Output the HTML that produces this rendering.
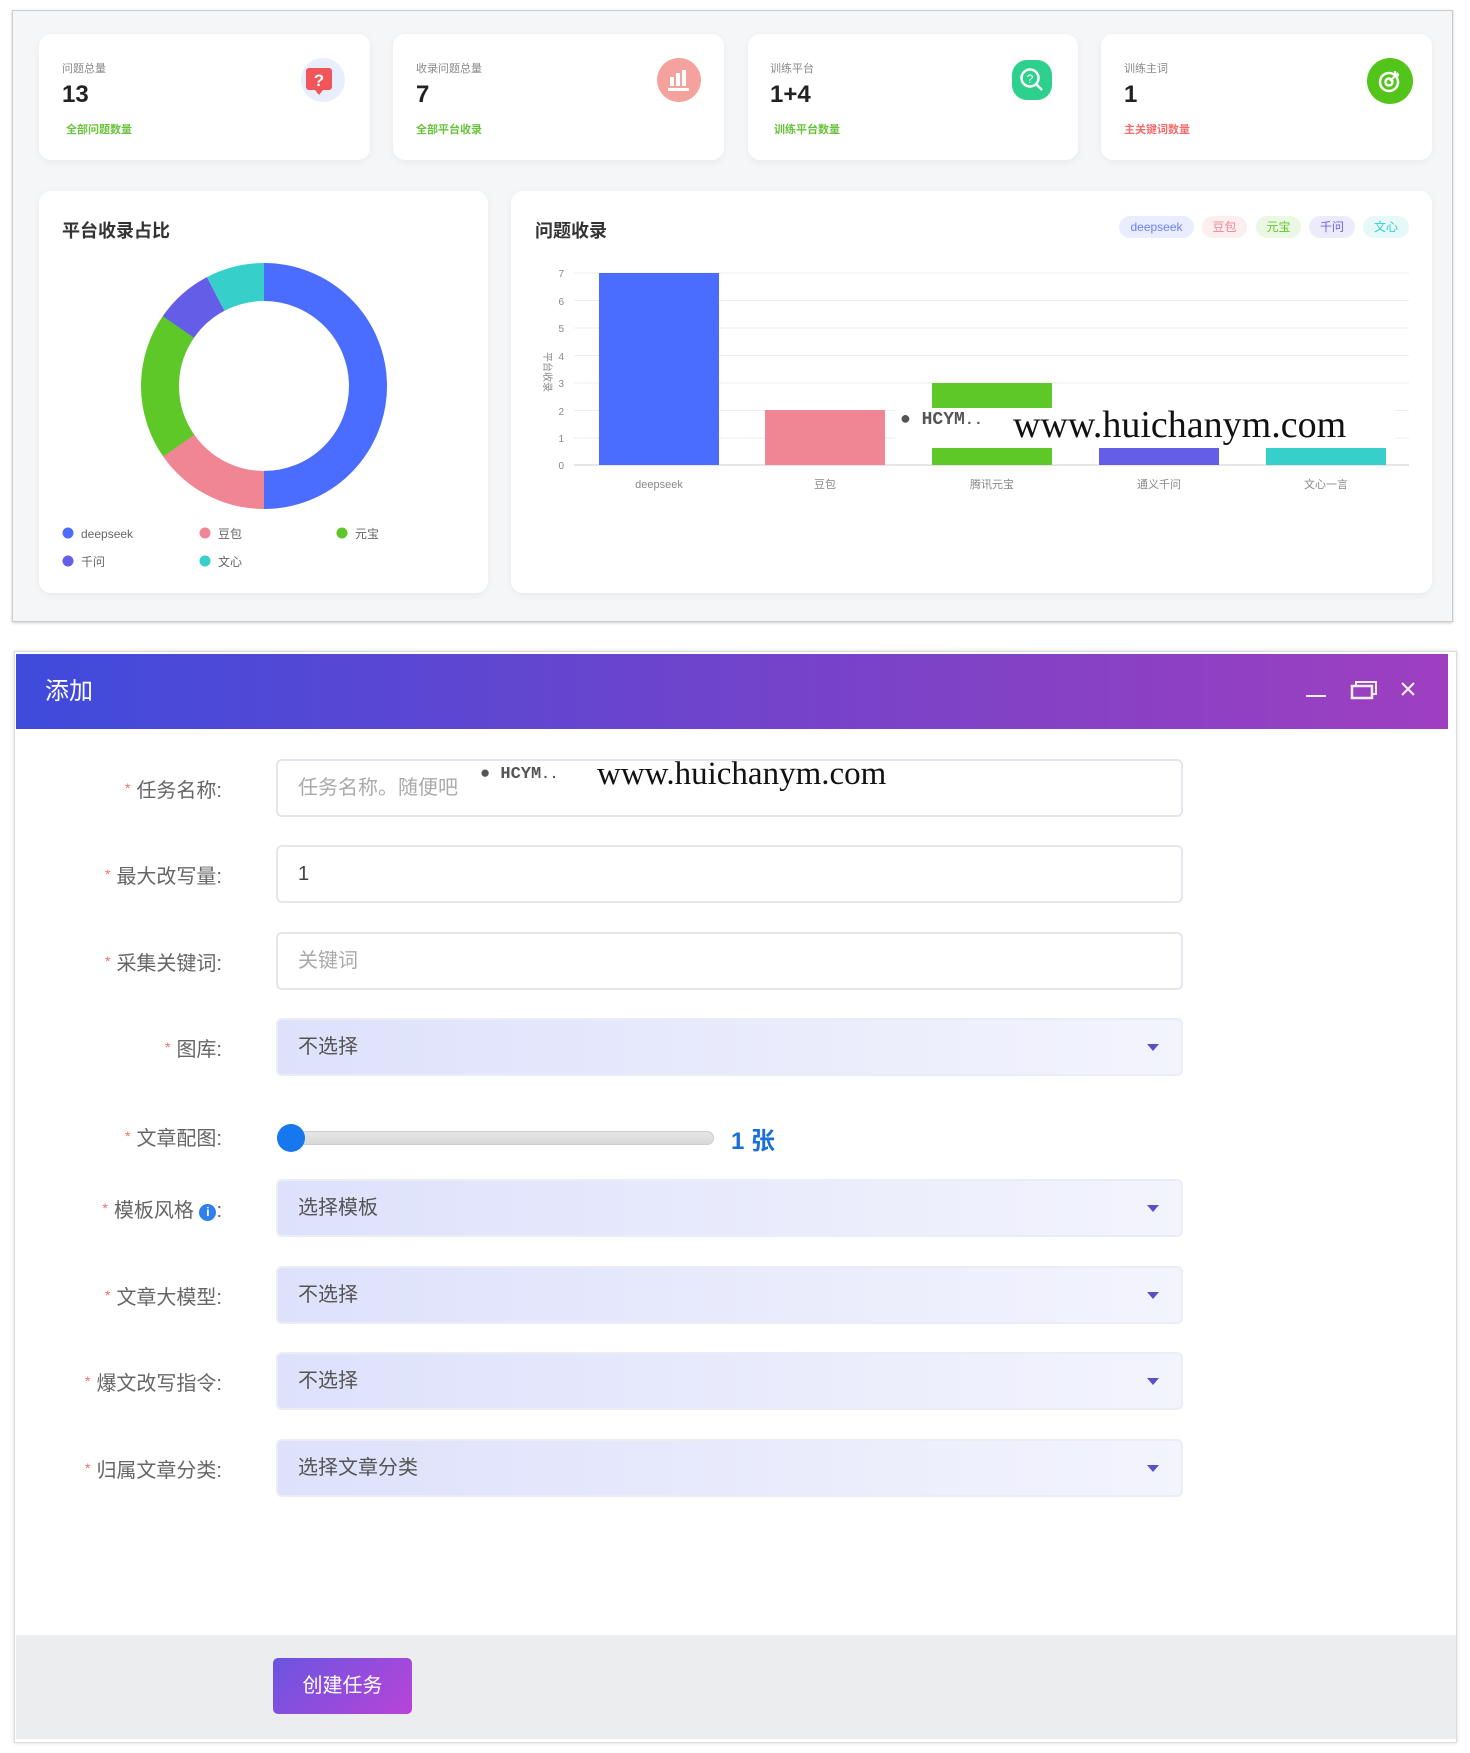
<!DOCTYPE html>
<html><head><meta charset="utf-8"><style>
*{box-sizing:border-box;margin:0;padding:0}
body{width:1470px;height:1753px;background:#fff;font-family:"Liberation Sans","Noto Sans CJK SC",sans-serif;position:relative;overflow:hidden}
.abs{position:absolute}
.panel{left:12px;top:10px;width:1441px;height:612px;background:#f5f6f8;border:1px solid #ccc;box-shadow:0 1px 3px rgba(0,0,0,.2)}
.card{background:#fff;border-radius:12px;box-shadow:0 2px 8px rgba(0,0,0,.05)}
.lbl{font-size:11px;color:#888}
.num{font-size:24px;font-weight:bold;color:#222}
.sub{font-size:11px;font-weight:bold}
.ic{width:44px;height:44px;border-radius:50%}
.tag{top:216px;height:22px;border-radius:11px;font-size:12px;line-height:22px;text-align:center}
.row{left:0;width:1440px}
.rl{position:absolute;right:1218px;font-size:20px;color:#666;white-space:nowrap}
.rl b{color:#f56c6c;font-weight:normal;font-size:14px;margin-right:6px;vertical-align:4px}
.inp{position:absolute;left:276px;width:910px;height:58px;border:2px solid #e4e6ee;border-radius:6px;font-size:20px;line-height:54px;padding-left:20px;color:#aaa}
.sel{background:linear-gradient(90deg,#dde1fb,#f3f4fd);border-color:#ececf6;color:#555}
.sel:after{content:"";position:absolute;right:22px;top:24px;border:6px solid transparent;border-top:7px solid #5a4fc8}
</style></head><body>
<div class="abs panel"></div>
<div class="abs card" style="left:39px;top:34px;width:331px;height:126px"></div>
<div class="abs card" style="left:393px;top:34px;width:331px;height:126px"></div>
<div class="abs card" style="left:748px;top:34px;width:330px;height:126px"></div>
<div class="abs card" style="left:1101px;top:34px;width:331px;height:126px"></div>
<div class="abs lbl" style="left:62px;top:60px">问题总量</div>
<div class="abs num" style="left:62px;top:81px">13</div>
<div class="abs sub" style="left:66px;top:121px;color:#67c23a">全部问题数量</div>
<div class="abs lbl" style="left:416px;top:60px">收录问题总量</div>
<div class="abs num" style="left:416px;top:81px">7</div>
<div class="abs sub" style="left:416px;top:121px;color:#67c23a">全部平台收录</div>
<div class="abs lbl" style="left:770px;top:60px">训练平台</div>
<div class="abs num" style="left:770px;top:81px">1+4</div>
<div class="abs sub" style="left:774px;top:121px;color:#67c23a">训练平台数量</div>
<div class="abs lbl" style="left:1124px;top:60px">训练主词</div>
<div class="abs num" style="left:1124px;top:81px">1</div>
<div class="abs sub" style="left:1124px;top:121px;color:#f56c6c">主关键词数量</div>
<div class="abs ic" style="left:301px;top:58px;background:#e8eefc"></div>
<svg class="abs" style="left:305px;top:66px" width="30" height="32"><rect x="1" y="2" width="26" height="22" rx="3" fill="#f0555a"/><path d="M10 24l4 5 4-5z" fill="#f0555a"/><text x="14" y="20" font-size="17" font-weight="bold" fill="#fff" text-anchor="middle" font-family="Liberation Sans">?</text></svg>
<div class="abs ic" style="left:657px;top:58px;background:#f5a19d"></div>
<svg class="abs" style="left:667px;top:68px" width="24" height="24"><rect x="3" y="9" width="4" height="9" fill="#fff"/><rect x="9" y="5" width="4" height="13" fill="#fff"/><rect x="15" y="2" width="4" height="16" fill="#fff"/><rect x="1" y="20" width="21" height="3" fill="#fff"/></svg>
<div class="abs" style="left:1012px;top:60px;width:40px;height:40px;border-radius:15px;background:#2ed08e"></div>
<svg class="abs" style="left:1018px;top:66px" width="28" height="28"><circle cx="12" cy="12" r="8.5" fill="none" stroke="#fff" stroke-width="2.5"/><path d="M18 18l6 6" stroke="#fff" stroke-width="2.5"/><text x="12" y="17" font-size="12" fill="#fff" text-anchor="middle" font-family="Liberation Sans">?</text></svg>
<div class="abs ic" style="left:1367px;top:58px;background:#52c41a;width:46px;height:46px"></div>
<svg class="abs" style="left:1376px;top:67px" width="28" height="28"><circle cx="13" cy="15" r="9" fill="none" stroke="#fff" stroke-width="2.5"/><circle cx="13" cy="15" r="3.5" fill="none" stroke="#fff" stroke-width="2.5"/><path d="M14 14l8-8M19 4v4h4" stroke="#fff" stroke-width="2.2" fill="none"/></svg>
<div class="abs card" style="left:39px;top:191px;width:449px;height:402px"></div>
<div class="abs card" style="left:511px;top:191px;width:921px;height:402px"></div>
<div class="abs" style="left:62px;top:217px;font-size:18px;font-weight:bold;color:#333">平台收录占比</div>
<div class="abs" style="left:535px;top:217px;font-size:18px;font-weight:bold;color:#333">问题收录</div>
<svg class="abs" style="left:0;top:0" width="500" height="600">
<g transform="translate(264,386)" fill="none" stroke-width="38">
<circle r="104" stroke="#4a6cff" stroke-dasharray="326.7 700" transform="rotate(-90)"/>
<circle r="104" stroke="#f08593" stroke-dasharray="100 700" transform="rotate(90)"/>
<circle r="104" stroke="#5ec829" stroke-dasharray="126.5 700" transform="rotate(145)"/>
<circle r="104" stroke="#645de8" stroke-dasharray="50.3 700" transform="rotate(214.6)"/>
<circle r="104" stroke="#36cfc9" stroke-dasharray="50.3 700" transform="rotate(242.3)"/>
</g>
<g font-size="12" fill="#666" font-family="Liberation Sans,Noto Sans CJK SC,sans-serif">
<circle cx="68" cy="533" r="5.5" fill="#4a6cff"/><text x="81" y="538">deepseek</text>
<circle cx="205" cy="533" r="5.5" fill="#f08593"/><text x="218" y="538">豆包</text>
<circle cx="342" cy="533" r="5.5" fill="#5ec829"/><text x="355" y="538">元宝</text>
<circle cx="68" cy="561" r="5.5" fill="#645de8"/><text x="81" y="566">千问</text>
<circle cx="205" cy="561" r="5.5" fill="#36cfc9"/><text x="218" y="566">文心</text>
</g></svg>
<div class="abs tag" style="left:1119px;width:75px;background:#e9edff;color:#6b80ff">deepseek</div>
<div class="abs tag" style="left:1202px;width:45px;background:#fdeef0;color:#f08593">豆包</div>
<div class="abs tag" style="left:1256px;width:45px;background:#ebf8e4;color:#5ec829">元宝</div>
<div class="abs tag" style="left:1309px;width:46px;background:#ecebfc;color:#6a63e8">千问</div>
<div class="abs tag" style="left:1363px;width:46px;background:#e6f8f7;color:#36cfc9">文心</div>
<svg class="abs" style="left:520px;top:260px" width="900" height="240" font-family="Liberation Sans,Noto Sans CJK SC,sans-serif">
<g stroke="#eee"><path d="M54 13H889M54 40.5H889M54 68H889M54 95.5H889M54 123H889M54 150.5H889M54 178H889"/></g>
<path d="M54 205H889" stroke="#ccc"/>
<g font-size="10" fill="#888" text-anchor="end"><text x="44" y="17">7</text><text x="44" y="45">6</text><text x="44" y="72">5</text><text x="44" y="100">4</text><text x="44" y="127">3</text><text x="44" y="155">2</text><text x="44" y="182">1</text><text x="44" y="209">0</text></g>
<text x="24" y="112" font-size="10" fill="#888" transform="rotate(90 24 112)" text-anchor="middle">平台收录</text>
<rect x="79" y="13" width="120" height="192" fill="#4a6cff"/>
<rect x="245" y="150" width="120" height="55" fill="#f08593"/>
<rect x="412" y="123" width="120" height="82" fill="#5ec829"/>
<rect x="579" y="178" width="120" height="27" fill="#645de8"/>
<rect x="746" y="178" width="120" height="27" fill="#36cfc9"/>
<g font-size="11" fill="#888" text-anchor="middle"><text x="139" y="228">deepseek</text><text x="305" y="228">豆包</text><text x="472" y="228">腾讯元宝</text><text x="639" y="228">通义千问</text><text x="806" y="228">文心一言</text></g>
</svg>
<div class="abs" style="left:895px;top:408px;width:500px;height:40px;background:#fff"></div>
<div class="abs" style="left:900px;top:410px;font:bold 18px 'Liberation Mono',monospace;color:#555">&#9679; HCYM<small>..</small></div>
<div class="abs" style="left:1013px;top:403px;font:38px 'Liberation Serif',serif;color:#111">www.huichanym.com</div>
<div class="abs" style="left:14px;top:651px;width:1443px;height:1092px;border:1px solid #ddd;box-shadow:0 0 4px rgba(0,0,0,.15)"></div>
<div class="abs" style="left:16px;top:654px;width:1432px;height:75px;background:linear-gradient(90deg,#3f4bdc,#7a42c8 60%,#9e3fc0)"></div>
<div class="abs" style="left:45px;top:671px;font-size:24px;color:#fff">添加</div>
<svg class="abs" style="left:1300px;top:678px" width="130" height="26"><path d="M6 18h20" stroke="#eee" stroke-width="2"/><rect x="52" y="8" width="20" height="12" fill="none" stroke="#eee" stroke-width="2.5"/><path d="M56 8V4h20v12h-4" fill="none" stroke="#eee" stroke-width="2"/><path d="M102 5l12 12M114 5l-12 12" stroke="#eee" stroke-width="2.2"/></svg>
<div class="abs" style="left:16px;top:1635px;width:1440px;height:104px;background:#ecedef"></div>
<div class="abs" style="left:273px;top:1658px;width:139px;height:56px;border-radius:5px;background:linear-gradient(135deg,#6a55e0,#b844d8);color:#fff;font-size:20px;line-height:56px;text-align:center">创建任务</div>
<div class="abs row" style="top:759px">
<div class="rl" style="top:15px"><b>*</b>任务名称:</div><div class="inp" style="top:0;width:907px">任务名称。随便吧</div></div>
<div class="abs" style="left:480px;top:761px;width:540px;height:34px;background:#fff"></div>
<div class="abs" style="left:480px;top:765px;font:bold 17px 'Liberation Mono',monospace;color:#555">&#9679; HCYM<small>..</small></div>
<div class="abs" style="left:597px;top:756px;font:33px 'Liberation Serif',serif;color:#111">www.huichanym.com</div>
<div class="abs row" style="top:845px"><div class="rl" style="top:15px"><b>*</b>最大改写量:</div><div class="inp" style="top:0;width:907px;color:#444">1</div></div>
<div class="abs row" style="top:932px"><div class="rl" style="top:15px"><b>*</b>采集关键词:</div><div class="inp" style="top:0;width:907px">关键词</div></div>
<div class="abs row" style="top:1018px"><div class="rl" style="top:15px"><b>*</b>图库:</div><div class="inp sel" style="top:0;width:907px">不选择</div></div>
<div class="abs row" style="top:1107px"><div class="rl" style="top:15px"><b>*</b>文章配图:</div></div>
<div class="abs" style="left:277px;top:1131px;width:437px;height:14px;border-radius:7px;background:linear-gradient(#e6e6e6,#d8d8d8);border:1px solid #ccc"></div>
<div class="abs" style="left:277px;top:1124px;width:28px;height:28px;border-radius:50%;background:#1677ee"></div>
<div class="abs" style="left:731px;top:1121px;font-size:24px;font-weight:bold;color:#1a6fd8">1 张</div>
<div class="abs row" style="top:1179px"><div class="rl" style="top:15px"><b>*</b>模板风格 <span style="display:inline-block;width:17px;height:17px;border-radius:50%;background:#2f80ed;color:#fff;font-size:12px;line-height:17px;text-align:center;font-weight:bold;vertical-align:1px">i</span>:</div><div class="inp sel" style="top:0;width:907px">选择模板</div></div>
<div class="abs row" style="top:1266px"><div class="rl" style="top:15px"><b>*</b>文章大模型:</div><div class="inp sel" style="top:0;width:907px">不选择</div></div>
<div class="abs row" style="top:1352px"><div class="rl" style="top:15px"><b>*</b>爆文改写指令:</div><div class="inp sel" style="top:0;width:907px">不选择</div></div>
<div class="abs row" style="top:1439px"><div class="rl" style="top:15px"><b>*</b>归属文章分类:</div><div class="inp sel" style="top:0;width:907px">选择文章分类</div></div>
</body></html>
